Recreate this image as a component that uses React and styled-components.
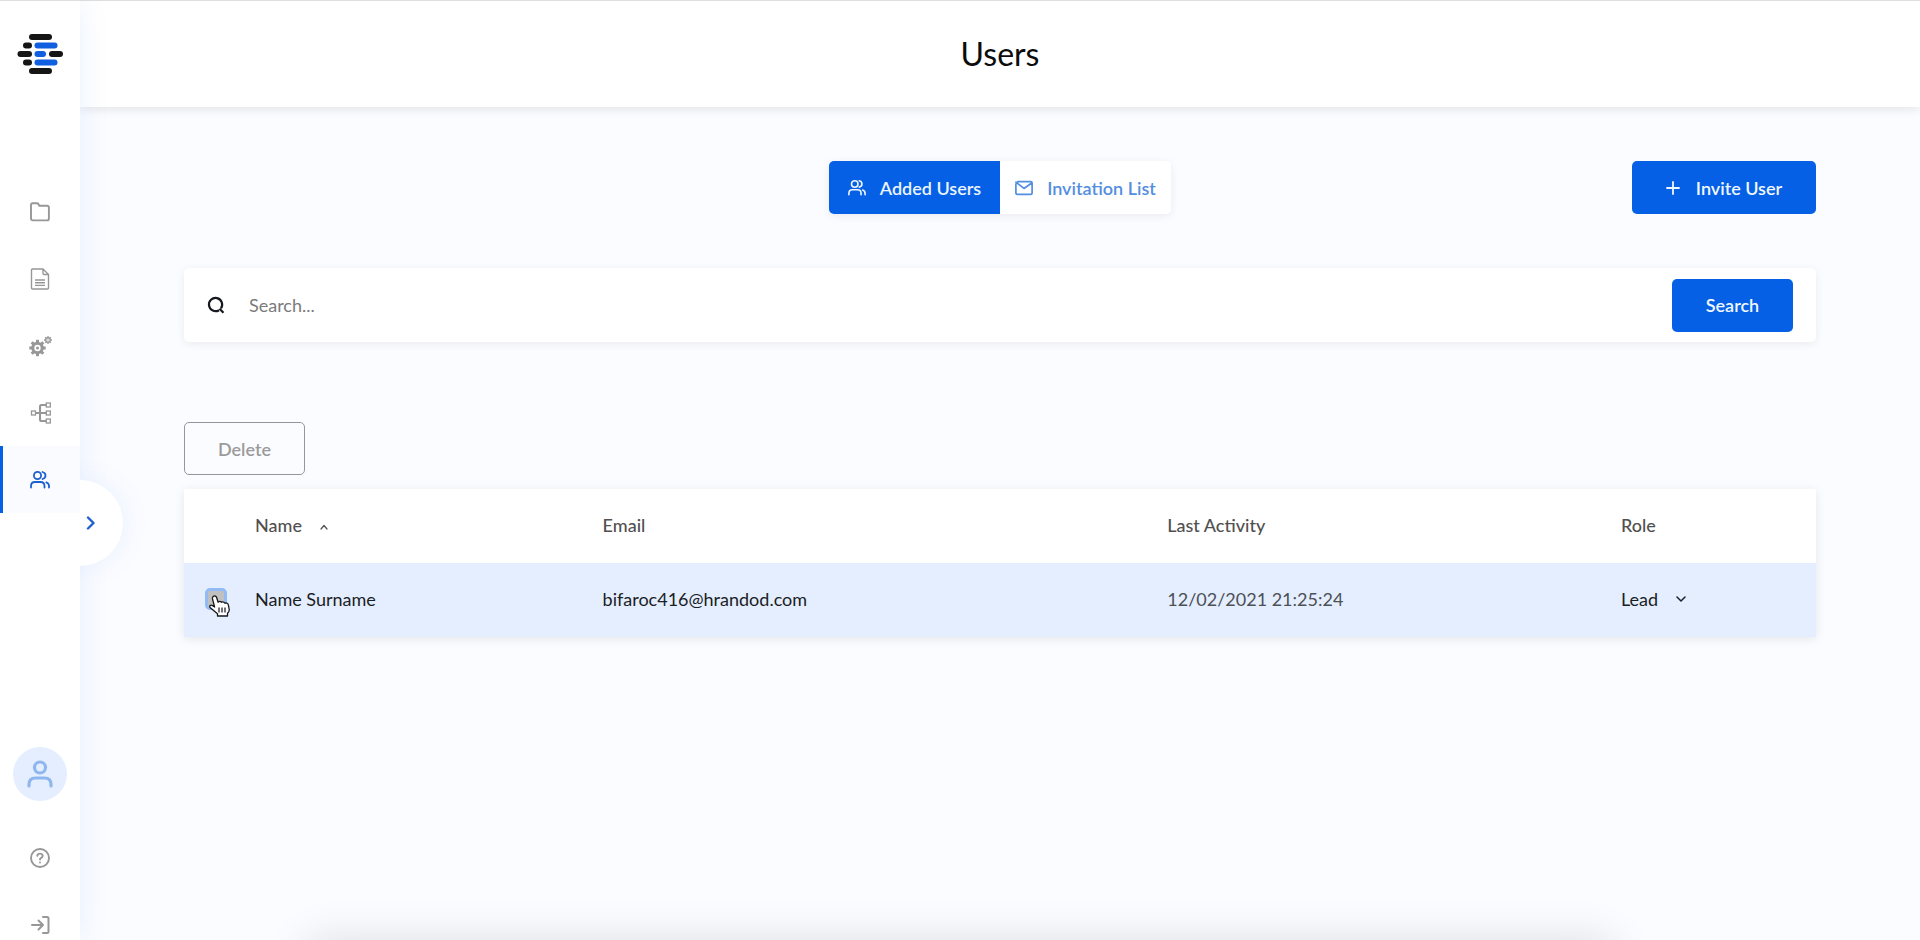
import React, { useState } from "react";
import styled, { createGlobalStyle, css } from "styled-components";

const blue = "#0560e6";
const grey = "#979797";

const GlobalStyle = createGlobalStyle`
  *, *::before, *::after { box-sizing: border-box; }
  body {
    margin: 0;
    background: #fbfcff;
    color: #1b1d24;
    font-family: Lato, "Liberation Sans", sans-serif;
    font-size: 18px;
    line-height: 24px;
  }
  button, input, select { font: inherit; }
`;

const Shell = styled.div`
  display: flex;
  min-height: 100vh;
`;

const Sidebar = styled.aside`
  position: sticky;
  top: 0;
  z-index: 2;
  flex: none;
  display: flex;
  flex-direction: column;
  align-items: center;
  width: 80px;
  height: 100vh;
  padding: 33px 0 5px;
  background: #fff;
  border-top: 1px solid #dedede;
  box-shadow: 0 0 32px rgba(5, 110, 240, 0.09);
`;

const Logo = styled.a`
  display: block;
  height: 40px;
  margin-bottom: 104px;
`;

const Nav = styled.nav`
  width: 100%;
`;

const NavLink = styled.a`
  display: flex;
  align-items: center;
  justify-content: center;
  width: 100%;
  height: 67px;
  color: ${(p) => (p.$active ? "#1d5fd0" : grey)};
  ${(p) => p.$active && css`
    background: #f9fbff;
    box-shadow: inset 3px 0 0 ${blue};
  `}
`;

const Account = styled.div`
  display: flex;
  flex-direction: column;
  align-items: center;
  gap: 47px;
  margin-top: auto;
`;

const Avatar = styled.a`
  display: flex;
  align-items: center;
  justify-content: center;
  width: 54px;
  height: 54px;
  border-radius: 50%;
  background: #e4eeff;
  color: #8fb7ee;
`;

const AccountLink = styled.a`
  display: flex;
  height: 20px;
  color: ${grey};
`;

const Expand = styled.button`
  position: absolute;
  top: 51%;
  left: 100%;
  display: flex;
  align-items: center;
  width: 43px;
  height: 86px;
  padding: 0 0 0 5px;
  border: 0;
  border-radius: 0 43px 43px 0;
  background: #fff;
  color: #1d5fd0;
  box-shadow: 0 0 30px rgba(5, 110, 240, 0.09);
  clip-path: inset(-40px -40px -40px 0);
`;

const Page = styled.div`
  flex: 1;
  min-width: 0;
`;

const Header = styled.header`
  display: flex;
  align-items: center;
  justify-content: center;
  height: 107px;
  background: #fff;
  border-top: 1px solid #dedede;
  box-shadow: 0 2px 10px rgba(0, 0, 0, 0.1);
`;

const Title = styled.h1`
  margin: 0;
  color: #0c0c0c;
  font-size: 32px;
  line-height: 40px;
  font-weight: 400;
`;

const Content = styled.main`
  padding: 54px 104px;
`;

const TopBar = styled.div`
  display: grid;
  grid-template-columns: 1fr auto 1fr;
  margin-bottom: 54px;
`;

const Tabs = styled.div`
  grid-column: 2;
  display: flex;
  border-radius: 5px;
  overflow: hidden;
  background: #fff;
  box-shadow: 0 2px 10px rgba(0, 0, 0, 0.07);
`;

const Tab = styled.button`
  display: flex;
  align-items: center;
  justify-content: center;
  gap: 14px;
  width: 171px;
  height: 53px;
  padding: 0;
  border: 0;
  background: ${(p) => (p.$active ? blue : "#fff")};
  color: ${(p) => (p.$active ? "#eaf5ff" : "#548ee0")};
  font-weight: 600;
  white-space: nowrap;
`;

const PrimaryButton = styled.button`
  display: flex;
  align-items: center;
  justify-content: center;
  justify-self: end;
  gap: 16px;
  width: ${(p) => (p.$wide ? 184 : 121)}px;
  height: 53px;
  padding: 0;
  border: 0;
  border-radius: 5px;
  background: ${blue};
  color: #f0f8ff;
  font-weight: 600;
`;

const SearchBar = styled.form`
  display: flex;
  align-items: center;
  gap: 24px;
  height: 74px;
  margin-bottom: 80px;
  padding: 0 23px;
  border-radius: 5px;
  background: #fff;
  box-shadow: 0 2px 10px rgba(0, 0, 0, 0.07);
`;

const SearchInput = styled.input`
  flex: 1;
  min-width: 0;
  padding: 0;
  border: 0;
  outline: 0;
  background: none;
  &::placeholder { color: #7b7b7b; opacity: 1; }
`;

const DeleteButton = styled.button`
  display: block;
  width: 121px;
  height: 53px;
  margin-bottom: 14px;
  padding: 0;
  border: 1px solid ${grey};
  border-radius: 5px;
  background: transparent;
  color: #9b9b9b;
  font-weight: 600;
`;

const Table = styled.table`
  width: 100%;
  table-layout: fixed;
  border-collapse: collapse;
  background: #fff;
  box-shadow: 0 2px 10px rgba(0, 0, 0, 0.09);
`;

const Col = styled.col`
  width: ${(p) => p.$w};
`;

const HeadCell = styled.th`
  height: 74px;
  padding: 0 0 2px;
  color: #505050;
  font-weight: 500;
  text-align: left;
`;

const SortButton = styled.button`
  display: flex;
  align-items: end;
  gap: 18px;
  padding: 0;
  border: 0;
  background: none;
  color: inherit;

  svg { margin-bottom: 6px; }
`;

const Row = styled.tr`
  background: #e4eeff;
`;

const Cell = styled.td`
  height: 74px;
  padding: 0 0 2px;
  color: ${(p) => (p.$muted ? "#4d5057" : "#1b1d24")};
`;

const Pick = styled.label`
  position: relative;
  display: block;
  width: 22px;
  height: 22px;
  margin-left: 21px;
`;

const Checkbox = styled.input`
  appearance: none;
  display: block;
  width: 22px;
  height: 22px;
  margin: 0;
  border: 3px solid #93bbf3;
  border-radius: 5px;
  background: #c0c0c0;
`;

const Pointer = styled.svg`
  position: absolute;
  top: 6px;
  left: 4px;
`;

const RoleField = styled.label`
  display: inline-flex;
  align-items: center;
  gap: 18px;
`;

const RoleSelect = styled.select`
  appearance: none;
  padding: 0;
  border: 0;
  background: none;
  color: inherit;
  field-sizing: content;
`;

const Dock = styled.div`
  position: fixed;
  top: 100%;
  left: 0;
  right: 0;
  height: 80px;
  margin: 0 16%;
  box-shadow: 0 0 44px rgba(0, 0, 0, 0.12);
  pointer-events: none;
`;

const Line = ({ size = 20, box = 20, w = 2, children }) => (
  <svg width={size} height={size} viewBox={`0 0 ${box} ${box}`} fill="none" stroke="currentColor"
    strokeWidth={w} strokeLinecap="round" strokeLinejoin="round" aria-hidden="true">
    {children}
  </svg>
);

const LogoMark = () => (
  <svg width="46" height="40" viewBox="0 0 46 40" aria-hidden="true">
    <g fill="#151515">
      <rect x="12" y="0" width="23" height="6" rx="3" />
      <rect x="6" y="8.5" width="9" height="6" rx="3" />
      <rect x="0.5" y="17" width="14.5" height="6" rx="3" />
      <rect x="32" y="17" width="14" height="6" rx="3" />
      <rect x="6" y="25.5" width="9" height="6" rx="3" />
      <rect x="12" y="34" width="23" height="6" rx="3" />
    </g>
    <g fill="#0f5fe0">
      <rect x="17.5" y="8.5" width="23" height="6" rx="3" />
      <rect x="17.5" y="17" width="11.5" height="6" rx="3" />
      <rect x="17.5" y="25.5" width="23" height="6" rx="3" />
    </g>
  </svg>
);

const FolderIcon = () => (
  <Line w={1.9}>
    <path d="M1 16.5V3q0-1.700 1.700-1.700H7q1 0 1.500.9l.8 1.500H17q1.900 0 1.900 1.900V16.500q0 1.900-1.900 1.900H2.900Q1 18.400 1 16.500z" />
  </Line>
);

const DocumentIcon = () => (
  <svg width="20" height="22" viewBox="0 0 20 22" fill="none" stroke="currentColor" strokeWidth="1.4" aria-hidden="true">
    <path d="M13 1H2.500Q1.500 1 1.500 2v18q0 1 1 1h15q1 0 1-1V6.500zM13 1v4.500q0 1 1 1h4.500" strokeLinejoin="round" />
    <path d="M5 12h10M5 14.700h10M5 17.400h10" />
  </svg>
);

const teeth = [0, 45, 90, 135, 180, 225, 270, 315];

const GearsIcon = () => (
  <svg width="24" height="22" viewBox="0 0 24 22" fill="none" stroke="currentColor" aria-hidden="true">
    <g transform="translate(9.500 13)">
      <circle r="4.700" strokeWidth="3" />
      <circle r="1.500" fill="currentColor" stroke="none" />
      {teeth.map((a) => <path key={a} d="M0-5.500V-8.200" strokeWidth="3" transform={`rotate(${a})`} />)}
    </g>
    <g transform="translate(20 5)">
      <circle r="2.300" strokeWidth="1.400" />
      <circle r="0.700" fill="currentColor" stroke="none" />
      {teeth.map((a) => <path key={a} d="M0-2.600V-3.900" strokeWidth="1.300" transform={`rotate(${a})`} />)}
    </g>
  </svg>
);

const TreeIcon = () => (
  <svg width="22" height="22" viewBox="0 0 22 22" fill="none" stroke="currentColor" strokeWidth="1.300" aria-hidden="true">
    <path d="M6.500 11H17M17 3h-4.500q-1.500 0-1.500 1.500v13q0 1.500 1.500 1.500H17" strokeWidth="2.100" />
    <rect x="2.500" y="9" width="4" height="4" />
    <rect x="17.300" y="1" width="4" height="4" />
    <rect x="17.300" y="9" width="4" height="4" />
    <rect x="17.300" y="17" width="4" height="4" />
  </svg>
);

const UsersIcon = ({ size = 20, w = 1.8 }) => (
  <Line size={size} w={w}>
    <circle cx="7.500" cy="5.500" r="3.600" />
    <path d="M1 17.500v-1.500q0-4 4-4h5.500q4 0 4 4v1.500M12.500 2q3 .8 3 3.500t-3 3.500M16.300 12.300q2.700.9 2.700 3.700v1.500" />
  </Line>
);

const MailIcon = () => (
  <Line size={18} w={1.9}>
    <path d="M3 3h14.500q1.500 0 1.500 1.500v11q0 1.500-1.500 1.500h-15Q1 17 1 15.500v-10M1 3.500l9 7 8.500-6" />
  </Line>
);

const PersonIcon = () => (
  <Line size={28} box={28} w={3.200}>
    <circle cx="14" cy="7.500" r="5.500" />
    <path d="M3 26v-1.500q0-6.500 6.500-6.500h9q6.500 0 6.500 6.500V26" />
  </Line>
);

const HelpIcon = () => (
  <Line w={1.9}>
    <circle cx="10" cy="10" r="9" />
    <path d="M7.300 7.700Q7.700 5.600 10 5.600t2.700 2.100q0 1.400-1.500 2.200T10 11.500M10 14.400v.1" />
  </Line>
);

const LogoutIcon = () => (
  <Line w={2}>
    <path d="M2 10h11M8.500 5.500l4.500 4.500-4.500 4.500M13 2h4q1.500 0 1.500 1.500v13q0 1.500-1.500 1.500h-4" />
  </Line>
);

const SearchIcon = () => (
  <svg width="18" height="18" viewBox="0 0 18 18" fill="none" stroke="#17181d" strokeWidth="2.200" aria-hidden="true">
    <path d="M12 14.200A6.600 6.600 0 1 1 14 12.300M12.500 12.800l4 4" />
  </svg>
);

const navItems = [
  { name: "Projects", Icon: FolderIcon },
  { name: "Documents", Icon: DocumentIcon },
  { name: "Settings", Icon: GearsIcon },
  { name: "Workflows", Icon: TreeIcon },
  { name: "Users", Icon: UsersIcon, active: true },
];

const users = [
  { name: "Name Surname", email: "bifaroc416@hrandod.com", activity: "12/02/2021 21:25:24", role: "Lead" },
];

export default function App() {
  const [query, setQuery] = useState("");
  return (
    <>
      <GlobalStyle />
      <Shell>
        <Sidebar>
          <Logo href="#" aria-label="Home"><LogoMark /></Logo>
          <Nav>
            {navItems.map(({ name, Icon, active }) => (
              <NavLink key={name} href="#" aria-label={name} $active={active}><Icon /></NavLink>
            ))}
          </Nav>
          <Account>
            <Avatar href="#" aria-label="Profile"><PersonIcon /></Avatar>
            <AccountLink href="#" aria-label="Help"><HelpIcon /></AccountLink>
            <AccountLink href="#" aria-label="Log out"><LogoutIcon /></AccountLink>
          </Account>
          <Expand aria-label="Expand menu">
            <Line size={14} box={14} w={2.400}><path d="M3 1.500l5.500 5.500L3 12.500" /></Line>
          </Expand>
        </Sidebar>
        <Page>
          <Header><Title>Users</Title></Header>
          <Content>
            <TopBar>
              <Tabs>
                <Tab $active><UsersIcon size={18} w={1.8} />Added Users</Tab>
                <Tab><MailIcon />Invitation List</Tab>
              </Tabs>
              <PrimaryButton $wide>
                <Line size={14} box={14} w={1.800}><path d="M7 1v12M1 7h12" /></Line>
                Invite User
              </PrimaryButton>
            </TopBar>
            <SearchBar onSubmit={(e) => e.preventDefault()}>
              <SearchIcon />
              <SearchInput aria-label="Search users" placeholder="Search..." value={query}
                onChange={(e) => setQuery(e.target.value)} />
              <PrimaryButton type="submit">Search</PrimaryButton>
            </SearchBar>
            <DeleteButton>Delete</DeleteButton>
            <Table>
              <colgroup>
                <Col $w="71px" />
                <Col $w="21.3%" />
                <Col $w="34.6%" />
                <Col $w="27.8%" />
                <Col />
              </colgroup>
              <thead>
                <tr>
                  <HeadCell />
                  <HeadCell>
                    <SortButton>
                      Name
                      <Line size={8} box={8} w={1.200}><path d="M1 6l3-3.500L7 6" /></Line>
                    </SortButton>
                  </HeadCell>
                  <HeadCell>Email</HeadCell>
                  <HeadCell>Last Activity</HeadCell>
                  <HeadCell>Role</HeadCell>
                </tr>
              </thead>
              <tbody>
                {users.map((u) => (
                  <Row key={u.email}>
                    <Cell>
                      <Pick>
                        <Checkbox type="checkbox" aria-label={`Select ${u.name}`} />
                        <Pointer width="22" height="24" viewBox="0 0 22 24" aria-hidden="true">
                          <path d="M4.200 2.500C5.800 1.200 7.300 2.200 7.700 3.800L9.100 8.200Q11 6.600 12.500 8.300 14.500 7.200 15.800 9.200 18.800 8.300 19.400 11.200L20.200 15.500Q20.500 17.300 18.500 19.300V22H8.500V19.800L1.300 13.800C-.2 12 1.700 10.300 3.600 11.600L5.600 13 3.500 4.900Q3.200 3.300 4.200 2.500Z"
                            fill="#fff" stroke="#15171b" strokeWidth="1.300" strokeLinejoin="round" />
                          <path d="M10 13.500v5M13 13.500v5M16 13.500v5" stroke="#15171b" strokeWidth="1.200" />
                        </Pointer>
                      </Pick>
                    </Cell>
                    <Cell>{u.name}</Cell>
                    <Cell>{u.email}</Cell>
                    <Cell $muted>{u.activity}</Cell>
                    <Cell>
                      <RoleField>
                        <RoleSelect aria-label={`Role of ${u.name}`} defaultValue={u.role}>
                          <option>{u.role}</option>
                        </RoleSelect>
                        <Line size={10} box={10} w={1.500}><path d="M1 3l4 4 4-4" /></Line>
                      </RoleField>
                    </Cell>
                  </Row>
                ))}
              </tbody>
            </Table>
          </Content>
        </Page>
      </Shell>
      <Dock />
    </>
  );
}
